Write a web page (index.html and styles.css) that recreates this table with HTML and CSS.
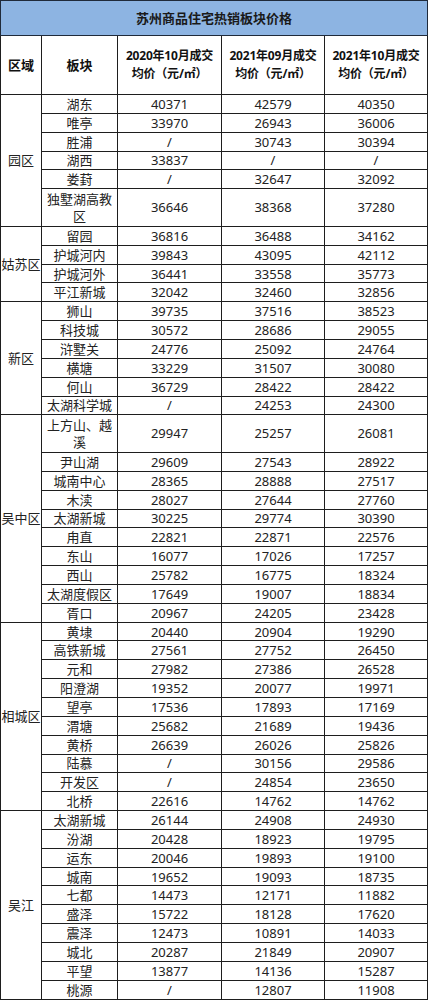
FILE: index.html
```html
<!DOCTYPE html>
<html lang="zh-CN">
<head>
<meta charset="utf-8">
<title>苏州商品住宅热销板块价格</title>
<link rel="stylesheet" href="styles.css">
</head>
<body>
<table class="price-table">
  <colgroup>
    <col class="c-area">
    <col class="c-block">
    <col class="c-num">
    <col class="c-num2">
    <col class="c-num2">
  </colgroup>
  <thead>
    <tr class="title-row"><th colspan="5">苏州商品住宅热销板块价格</th></tr>
    <tr class="head-row">
      <th class="h-big">区域</th>
      <th class="h-big">板块</th>
      <th class="h-num">2020年10月成交<br>均价（元/㎡）</th>
      <th class="h-num">2021年09月成交<br>均价（元/㎡）</th>
      <th class="h-num">2021年10月成交<br>均价（元/㎡）</th>
    </tr>
  </thead>
  <tbody>
    <tr><td class="area" rowspan="6">园区</td><td>湖东</td><td>40371</td><td>42579</td><td>40350</td></tr>
    <tr><td>唯亭</td><td>33970</td><td>26943</td><td>36006</td></tr>
    <tr><td>胜浦</td><td>/</td><td>30743</td><td>30394</td></tr>
    <tr><td>湖西</td><td>33837</td><td>/</td><td>/</td></tr>
    <tr><td>娄葑</td><td>/</td><td>32647</td><td>32092</td></tr>
    <tr class="tall"><td>独墅湖高教区</td><td>36646</td><td>38368</td><td>37280</td></tr>

    <tr><td class="area" rowspan="4">姑苏区</td><td>留园</td><td>36816</td><td>36488</td><td>34162</td></tr>
    <tr><td>护城河内</td><td>39843</td><td>43095</td><td>42112</td></tr>
    <tr><td>护城河外</td><td>36441</td><td>33558</td><td>35773</td></tr>
    <tr><td>平江新城</td><td>32042</td><td>32460</td><td>32856</td></tr>

    <tr><td class="area" rowspan="6">新区</td><td>狮山</td><td>39735</td><td>37516</td><td>38523</td></tr>
    <tr><td>科技城</td><td>30572</td><td>28686</td><td>29055</td></tr>
    <tr><td>浒墅关</td><td>24776</td><td>25092</td><td>24764</td></tr>
    <tr><td>横塘</td><td>33229</td><td>31507</td><td>30080</td></tr>
    <tr><td>何山</td><td>36729</td><td>28422</td><td>28422</td></tr>
    <tr><td>太湖科学城</td><td>/</td><td>24253</td><td>24300</td></tr>

    <tr class="tall"><td class="area" rowspan="10">吴中区</td><td>上方山、越溪</td><td>29947</td><td>25257</td><td>26081</td></tr>
    <tr><td>尹山湖</td><td>29609</td><td>27543</td><td>28922</td></tr>
    <tr><td>城南中心</td><td>28365</td><td>28888</td><td>27517</td></tr>
    <tr><td>木渎</td><td>28027</td><td>27644</td><td>27760</td></tr>
    <tr><td>太湖新城</td><td>30225</td><td>29774</td><td>30390</td></tr>
    <tr><td>甪直</td><td>22821</td><td>22871</td><td>22576</td></tr>
    <tr><td>东山</td><td>16077</td><td>17026</td><td>17257</td></tr>
    <tr><td>西山</td><td>25782</td><td>16775</td><td>18324</td></tr>
    <tr><td>太湖度假区</td><td>17649</td><td>19007</td><td>18834</td></tr>
    <tr><td>胥口</td><td>20967</td><td>24205</td><td>23428</td></tr>

    <tr><td class="area" rowspan="10">相城区</td><td>黄埭</td><td>20440</td><td>20904</td><td>19290</td></tr>
    <tr><td>高铁新城</td><td>27561</td><td>27752</td><td>26450</td></tr>
    <tr><td>元和</td><td>27982</td><td>27386</td><td>26528</td></tr>
    <tr><td>阳澄湖</td><td>19352</td><td>20077</td><td>19971</td></tr>
    <tr><td>望亭</td><td>17536</td><td>17893</td><td>17169</td></tr>
    <tr><td>渭塘</td><td>25682</td><td>21689</td><td>19436</td></tr>
    <tr><td>黄桥</td><td>26639</td><td>26026</td><td>25826</td></tr>
    <tr><td>陆慕</td><td>/</td><td>30156</td><td>29586</td></tr>
    <tr><td>开发区</td><td>/</td><td>24854</td><td>23650</td></tr>
    <tr><td>北桥</td><td>22616</td><td>14762</td><td>14762</td></tr>

    <tr><td class="area" rowspan="10">吴江</td><td>太湖新城</td><td>26144</td><td>24908</td><td>24930</td></tr>
    <tr><td>汾湖</td><td>20428</td><td>18923</td><td>19795</td></tr>
    <tr><td>运东</td><td>20046</td><td>19893</td><td>19100</td></tr>
    <tr><td>城南</td><td>19652</td><td>19093</td><td>18735</td></tr>
    <tr><td>七都</td><td>14473</td><td>12171</td><td>11882</td></tr>
    <tr><td>盛泽</td><td>15722</td><td>18128</td><td>17620</td></tr>
    <tr><td>震泽</td><td>12473</td><td>10891</td><td>14033</td></tr>
    <tr><td>城北</td><td>20287</td><td>21849</td><td>20907</td></tr>
    <tr><td>平望</td><td>13877</td><td>14136</td><td>15287</td></tr>
    <tr><td>桃源</td><td>/</td><td>12807</td><td>11908</td></tr>
  </tbody>
</table>
</body>
</html>
```

FILE: styles.css
```css
html, body {
  margin: 0;
  padding: 0;
  background: #ffffff;
}

.price-table {
  border-collapse: collapse;
  table-layout: fixed;
  width: 428px;
  font-family: "Noto Sans", "Noto Sans CJK SC", sans-serif;
  font-size: 13px;
  color: #222222;
}

.c-area { width: 41px; }
.c-block { width: 76px; }
.c-num { width: 104px; }
.c-num2 { width: 103px; }

.price-table th,
.price-table td {
  border: 1px solid #1e1e1e;
  padding: 0 2px;
  text-align: center;
  vertical-align: middle;
  line-height: 16px;
  font-weight: normal;
}

.title-row th {
  height: 34px;
  background: #8db4e2;
  font-weight: bold;
  font-size: 13px;
  color: #1a1a1a;
  border-color: #1f2a3a;
}

.head-row th {
  height: 58px;
  font-weight: bold;
  color: #111111;
}

.head-row .h-big {
  font-size: 13px;
}

.head-row .h-num {
  font-size: 12px;
  line-height: 18px;
  letter-spacing: -0.2px;
  padding: 0;
}

.price-table tbody td {
  height: 17.85px;
}

.price-table tbody tr.tall td {
  height: 36.7px;
  line-height: 17px;
}

.price-table tbody td.area {
  padding: 0;
}
```
